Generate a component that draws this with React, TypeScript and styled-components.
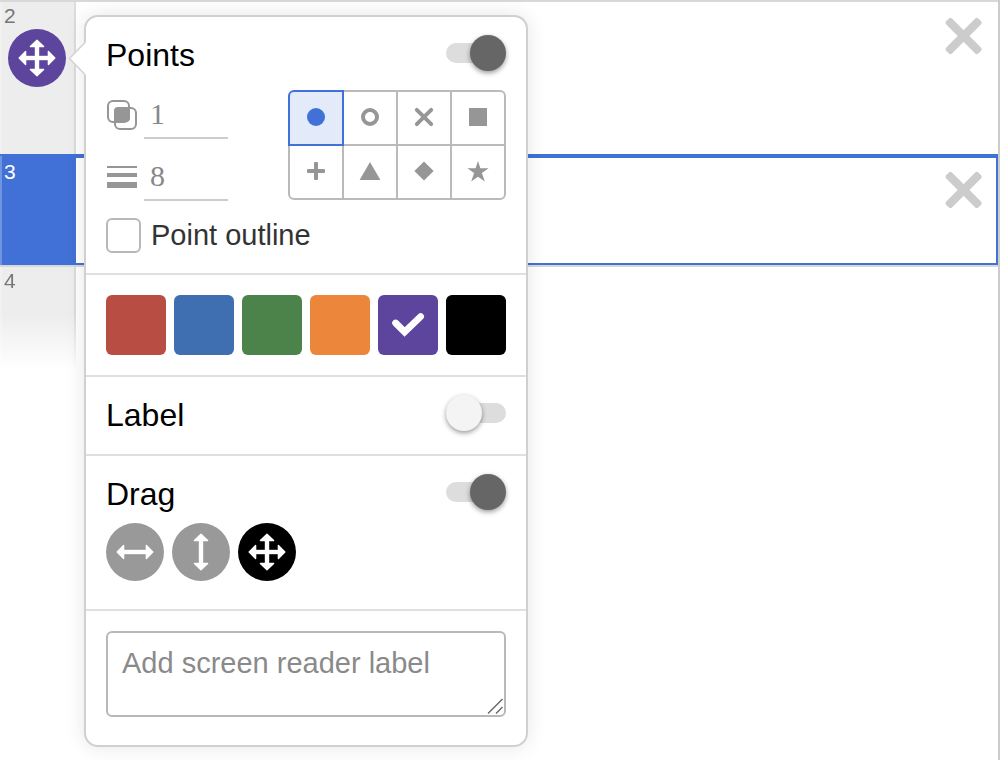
import React, { useState } from "react";
import styled, { createGlobalStyle, css } from "styled-components";

const BLUE = "#4171d6";
const PURPLE = "#5d449d";
const ICON_GRAY = "#969696";

const GlobalStyle = createGlobalStyle`
  * { box-sizing: border-box; }
  body {
    margin: 0;
    background: #fff;
    font-family: "Liberation Sans", Arial, sans-serif;
  }
  button, input, textarea { font: inherit; margin: 0; }
`;

const Page = styled.main`
  position: relative;
  min-height: 100vh;
  border-right: 2px solid #ccc;
  overflow: hidden;
`;

const Row = styled.section<{ $selected?: boolean }>`
  display: flex;
  justify-content: space-between;
  align-items: flex-start;
  border-top: 2px solid ${(p) => (p.$selected ? BLUE : "#d8d8d8")};
  ${(p) => p.$selected && css`box-shadow: inset 0 0 0 2px ${BLUE};`}
`;

const Gutter = styled.div<{ $selected?: boolean; $fade?: boolean; $height: number }>`
  width: 76px;
  min-height: ${(p) => p.$height}px;
  padding: ${(p) => (p.$selected ? 5 : 3)}px 6px 0 2px;
  border-left: 2px solid rgba(255, 255, 255, 0.25);
  border-right: 2px solid ${(p) => (p.$selected ? BLUE : "#dcdcdc")};
  background: ${(p) => (p.$selected ? BLUE : "#ededed")};
  color: ${(p) => (p.$selected ? "#fff" : "#777")};
  font-size: 21px;
  line-height: 22px;
  ${(p) => p.$fade && css`mask-image: linear-gradient(#000 45%, transparent);`}
`;

const RoundButton = styled.button<{ $color: string }>`
  display: block;
  width: 58px;
  height: 58px;
  padding: 0;
  border: 0;
  border-radius: 50%;
  background: ${(p) => p.$color};
  cursor: pointer;
`;

const GutterIcon = styled.div`
  display: flex;
  margin: 2px 0 0 4px;
`;

const CloseButton = styled.button`
  width: 40px;
  height: 40px;
  margin: 14px 14px 0 0;
  padding: 0;
  border: 0;
  background: none;
  cursor: pointer;
  svg { display: block; }
`;

const Popover = styled.div`
  position: absolute;
  top: 15px;
  left: 84px;
  width: 444px;
  border: 2px solid #d0d0d0;
  border-radius: 14px;
  background: #fff;
  box-shadow: 0 0 20px rgba(0, 0, 0, 0.1);
`;

const Pointer = styled.svg`
  position: absolute;
  top: 24px;
  left: -18px;
`;

const Section = styled.section<{ $top: number; $bottom: number }>`
  padding: ${(p) => p.$top}px 20px ${(p) => p.$bottom}px;
  & + & { border-top: 2px solid #e0e0e0; }
`;

const Header = styled.div`
  display: flex;
  justify-content: space-between;
  align-items: flex-start;
`;

const Title = styled.label`
  color: #000;
  font-size: 32px;
  line-height: 40px;
`;

const Switch = styled.input`
  appearance: none;
  position: relative;
  display: flex;
  align-items: center;
  width: 60px;
  height: 36px;
  cursor: pointer;
  &::before {
    content: "";
    flex: 1;
    height: 20px;
    border-radius: 10px;
    background: #ddd;
  }
  &::after {
    content: "";
    position: absolute;
    left: 0;
    width: 36px;
    height: 36px;
    border-radius: 50%;
    background: #f4f4f4;
    box-shadow: 0 2px 5px rgba(0, 0, 0, 0.4);
  }
  &:checked::after {
    left: 24px;
    background: #666;
  }
`;

const StyleBody = styled.div`
  display: flex;
  justify-content: space-between;
  align-items: flex-start;
  margin-top: 15px;
`;

const Fields = styled.div`
  display: grid;
  gap: 13px;
`;

const Field = styled.label`
  display: flex;
  align-items: center;
  gap: 6px;
`;

const NumberInput = styled.input`
  width: 84px;
  height: 49px;
  padding: 0 6px;
  border: 0;
  border-bottom: 2px solid #ccc;
  outline: none;
  background: none;
  color: #888;
  font-family: "Liberation Serif", "Times New Roman", serif;
  font-size: 30px;
`;

const ShapeGrid = styled.div`
  display: grid;
  grid-template-columns: repeat(4, 54px);
  grid-auto-rows: 54px;
  padding: 0 2px 2px 0;
`;

const ShapeCell = styled.button<{ $on: boolean }>`
  position: relative;
  z-index: ${(p) => (p.$on ? 1 : 0)};
  display: flex;
  align-items: center;
  justify-content: center;
  width: 56px;
  height: 56px;
  padding: 0;
  border: 2px solid ${(p) => (p.$on ? BLUE : "#bababa")};
  background: ${(p) => (p.$on ? "#e3eaf9" : "#fff")};
  color: ${(p) => (p.$on ? BLUE : ICON_GRAY)};
  cursor: pointer;
  &:nth-child(1) { border-top-left-radius: 6px; }
  &:nth-child(4) { border-top-right-radius: 6px; }
  &:nth-child(5) { border-bottom-left-radius: 6px; }
  &:nth-child(8) { border-bottom-right-radius: 6px; }
`;

const CheckLabel = styled.label`
  display: flex;
  align-items: center;
  gap: 10px;
  margin-top: 17px;
  color: #333;
  font-size: 29px;
  line-height: 35px;
`;

const CheckBox = styled.input`
  appearance: none;
  width: 35px;
  height: 35px;
  border: 2px solid #b8b8b8;
  border-radius: 6px;
  background: #fff;
  &:checked { background: ${BLUE}; }
`;

const Line = styled.div`
  display: flex;
  gap: 8px;
`;

const DragLine = styled(Line)`
  margin-top: 9px;
`;

const Swatch = styled.button<{ $color: string }>`
  flex: 1;
  height: 60px;
  padding: 0;
  border: 0;
  border-radius: 6px;
  background: ${(p) => p.$color};
  cursor: pointer;
  svg { display: block; }
`;

const NoteWrap = styled.div`
  position: relative;
  display: flex;
`;

const Note = styled.textarea`
  flex: 1;
  min-width: 0;
  height: 86px;
  padding: 14px;
  border: 2px solid #b8b8b8;
  border-radius: 6px;
  outline: none;
  resize: none;
  background: #fff;
  color: #333;
  font-size: 29px;
  line-height: 33px;
  &::placeholder { color: #8a8a8a; opacity: 1; }
`;

const Grip = styled.svg`
  position: absolute;
  right: 3px;
  bottom: 3px;
  pointer-events: none;
`;

type Direction = "horizontal" | "vertical" | "both";

function ArrowsIcon({ direction }: { direction: Direction }) {
  const arrow = (
    <>
      <path d="M14 29H44" strokeWidth="4.4" />
      <path d="M11.2 29 17.6 22.4V35.6Z M46.8 29 40.4 22.4V35.6Z" strokeWidth="1.4" strokeLinejoin="round" />
    </>
  );
  return (
    <svg width="58" height="58" viewBox="0 0 58 58" fill="#fff" stroke="#fff" aria-hidden="true">
      {direction !== "vertical" && <g>{arrow}</g>}
      {direction !== "horizontal" && <g transform="rotate(90 29 29)">{arrow}</g>}
    </svg>
  );
}

function CloseIcon() {
  return (
    <svg width="40" height="40" viewBox="0 0 40 40" fill="#ccc" aria-hidden="true">
      <rect x="-3.2" y="15.8" width="45.6" height="8.4" rx="2.5" transform="rotate(45 19.6 20)" />
      <rect x="-3.2" y="15.8" width="45.6" height="8.4" rx="2.5" transform="rotate(-45 19.6 20)" />
    </svg>
  );
}

const shapes: { name: string; art: React.ReactNode }[] = [
  { name: "Point", art: <circle cx="12" cy="11" r="9" fill="currentColor" /> },
  { name: "Open", art: <circle cx="12" cy="11" r="7" strokeWidth="4" /> },
  { name: "Cross", art: <path d="M4.8 3.8 19.2 18.2M19.2 3.8 4.8 18.2" strokeWidth="3.9" strokeLinecap="round" /> },
  { name: "Square", art: <path d="M3 2H21V20H3Z" fill="currentColor" stroke="none" /> },
  {
    name: "Plus",
    art: (
      <g fill="currentColor" stroke="none">
        <rect x="3" y="9" width="18" height="4" rx="1" />
        <rect x="10" y="2" width="4" height="18" rx="1" />
      </g>
    ),
  },
  { name: "Triangle", art: <path d="M12 2 22.4 20H1.6Z" fill="currentColor" stroke="none" /> },
  { name: "Diamond", art: <path d="M12 1.4 21.6 11 12 20.6 2.4 11Z" fill="currentColor" stroke="none" /> },
  {
    name: "Star",
    art: (
      <path
        d="M12 1 14.4 8.2 22.6 8.2 15.9 13 18.8 21.5 12 16.7 5.2 21.5 8.1 13 1.4 8.2 9.6 8.2Z"
        fill="currentColor"
        stroke="none"
      />
    ),
  },
];

const colors = [
  { name: "Red", value: "#b84d44" },
  { name: "Blue", value: "#3f6fb0" },
  { name: "Green", value: "#4c834b" },
  { name: "Orange", value: "#eb863b" },
  { name: "Purple", value: PURPLE },
  { name: "Black", value: "#000" },
];

const directions: Direction[] = ["horizontal", "vertical", "both"];

export default function App() {
  const [shape, setShape] = useState("Point");
  const [color, setColor] = useState("Purple");
  const [drag, setDrag] = useState<Direction>("both");

  return (
    <Page>
      <GlobalStyle />
      <Row>
        <Gutter $height={152}>
          2
          <GutterIcon>
            <RoundButton $color={PURPLE} aria-label="Point style">
              <ArrowsIcon direction="both" />
            </RoundButton>
          </GutterIcon>
        </Gutter>
        <CloseButton aria-label="Delete expression 2"><CloseIcon /></CloseButton>
      </Row>
      <Row $selected>
        <Gutter $height={109} $selected>3</Gutter>
        <CloseButton aria-label="Delete expression 3"><CloseIcon /></CloseButton>
      </Row>
      <Row>
        <Gutter $height={104} $fade>4</Gutter>
      </Row>

      <Popover role="dialog" aria-label="Point options">
        <Pointer width="20" height="36" viewBox="0 0 20 36" aria-hidden="true">
          <path d="M18 1 1.5 17.5 18 34H20V1Z" fill="#fff" />
          <path d="M17 1.5 1.5 17.5 17 33.5" fill="none" stroke="#d4d4d4" strokeWidth="1.6" />
        </Pointer>

        <Section $top={18} $bottom={20}>
          <Header>
            <Title htmlFor="points">Points</Title>
            <Switch id="points" type="checkbox" role="switch" defaultChecked />
          </Header>
          <StyleBody>
            <Fields>
              <Field>
                <svg width="32" height="32" viewBox="0 0 32 32" fill="none" stroke={ICON_GRAY} strokeWidth="2" aria-hidden="true">
                  <rect x="2" y="2" width="21" height="21" rx="5" />
                  <rect x="9" y="9" width="21" height="21" rx="5" />
                  <rect x="8" y="8" width="16" height="15" rx="4" fill={ICON_GRAY} stroke="none" />
                </svg>
                <NumberInput aria-label="Opacity" defaultValue="1" />
              </Field>
              <Field>
                <svg width="32" height="30" viewBox="0 0 32 30" fill={ICON_GRAY} aria-hidden="true">
                  <rect x="1" y="4" width="30" height="2" />
                  <rect x="1" y="11" width="30" height="4" />
                  <rect x="1" y="20" width="30" height="6" />
                </svg>
                <NumberInput aria-label="Thickness" defaultValue="8" />
              </Field>
            </Fields>
            <ShapeGrid role="group" aria-label="Point shape">
              {shapes.map((s) => (
                <ShapeCell
                  key={s.name}
                  $on={s.name === shape}
                  aria-label={s.name}
                  aria-pressed={s.name === shape}
                  onClick={() => setShape(s.name)}
                >
                  <svg width="24" height="24" viewBox="0 0 24 24" fill="none" stroke="currentColor" strokeWidth="0">
                    {s.art}
                  </svg>
                </ShapeCell>
              ))}
            </ShapeGrid>
          </StyleBody>
          <CheckLabel>
            <CheckBox type="checkbox" />
            Point outline
          </CheckLabel>
        </Section>

        <Section $top={20} $bottom={20}>
          <Line role="group" aria-label="Color">
            {colors.map((c) => (
              <Swatch
                key={c.name}
                $color={c.value}
                aria-label={c.name}
                aria-pressed={c.name === color}
                onClick={() => setColor(c.name)}
              >
                {c.name === color && (
                  <svg width="60" height="60" viewBox="0 0 60 60" fill="none" stroke="#fff" strokeWidth="6.8" strokeLinecap="round">
                    <path d="M17.6 28 26.6 37 42.6 21.6" />
                  </svg>
                )}
              </Swatch>
            ))}
          </Line>
        </Section>

        <Section $top={18} $bottom={19}>
          <Header>
            <Title htmlFor="label">Label</Title>
            <Switch id="label" type="checkbox" role="switch" />
          </Header>
        </Section>

        <Section $top={18} $bottom={28}>
          <Header>
            <Title htmlFor="drag">Drag</Title>
            <Switch id="drag" type="checkbox" role="switch" defaultChecked />
          </Header>
          <DragLine role="group" aria-label="Drag direction">
            {directions.map((d) => (
              <RoundButton
                key={d}
                $color={d === drag ? "#000" : "#999"}
                aria-label={d}
                aria-pressed={d === drag}
                onClick={() => setDrag(d)}
              >
                <ArrowsIcon direction={d} />
              </RoundButton>
            ))}
          </DragLine>
        </Section>

        <Section $top={20} $bottom={28}>
          <NoteWrap>
            <Note aria-label="Screen reader label" placeholder="Add screen reader label" />
            <Grip width="16" height="16" viewBox="0 0 16 16" stroke="#666" strokeWidth="1.4" aria-hidden="true">
              <path d="M1 15.5 15.5 1M9 15.5 15.5 9" />
            </Grip>
          </NoteWrap>
        </Section>
      </Popover>
    </Page>
  );
}
